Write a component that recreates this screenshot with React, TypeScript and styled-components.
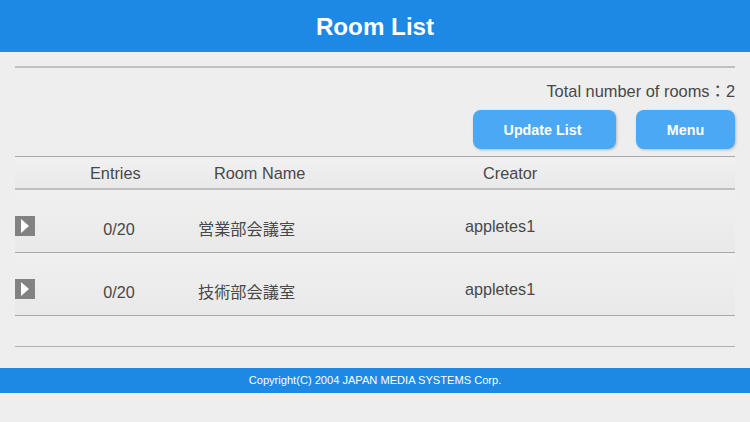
import * as React from 'react'
import styled, { createGlobalStyle } from 'styled-components'

const GlobalStyle = createGlobalStyle`
  html, body {
    margin: 0;
    background: #eeeeee;
    color: #484848;
    font-family: "Liberation Sans", "Noto Sans CJK JP", sans-serif;
  }
`

const Page = styled.div`
  width: 750px;
  height: 422px;
  overflow: hidden;
  display: flex;
  flex-direction: column;
`

const TitleBar = styled.header`
  height: 52px;
  flex: none;
  background: #1e88e5;
  color: #fff;
  font-size: 24.2px;
  font-weight: bold;
  line-height: 53px;
  text-align: center;
`

const Content = styled.main`
  margin: 14px 15px 0;
  border-top: 2px solid #c0c0c0;
`

const TotalLine = styled.div`
  height: 42px;
  font-size: 16.4px;
  line-height: 46px;
  text-align: right;
`

const Buttons = styled.div`
  display: flex;
  justify-content: flex-end;
  gap: 20px;
  margin-bottom: 7px;
`

const ActionButton = styled.button<{ $width: number; $nudge?: number }>`
  width: ${(p) => p.$width}px;
  height: 39px;
  padding: 0 ${(p) => p.$nudge ?? 0}px 0 0;
  border: 0;
  border-radius: 8px;
  background: #4aa8f5;
  box-shadow: 1px 1px 3px rgba(0, 0, 0, 0.22);
  color: #fff;
  font-family: inherit;
  font-size: 14.3px;
  font-weight: bold;
`

const HeadRow = styled.div`
  display: grid;
  grid-template-columns: 60px 80px 210px 1fr;
  height: 31px;
  border-top: 1px solid #a8a8a8;
  border-bottom: 2px solid #c0c0c0;
  background: linear-gradient(#f1f1f1, #e9e9e9);
  font-size: 16.3px;
  line-height: 33px;
`

const HeadCell = styled.div<{ $left: number }>`
  padding-left: ${(p) => p.$left}px;
  white-space: nowrap;
`

const Row = styled.div`
  display: grid;
  grid-template-columns: 64px 80px 267px 1fr;
  height: 62px;
  border-bottom: 1px solid #a8a8a8;
  background: linear-gradient(#f0f0f0, #e9e9e9);
  font-size: 16.2px;
`

const PlayBox = styled.div`
  width: 20px;
  height: 20px;
  margin-top: 26px;
  background: #828282;
  display: flex;
  align-items: center;
  justify-content: center;
`

const Entries = styled.div`
  margin-top: 30px;
  text-align: center;
  line-height: 18px;
`

const RoomName = styled.div`
  margin-top: 28px;
  padding-left: 39px;
  line-height: 22px;
  white-space: nowrap;
`

const Creator = styled.div`
  margin-top: 28px;
  padding-left: 39px;
  line-height: 17px;
`

const BottomRule = styled.div`
  height: 30px;
  border-bottom: 1px solid #b0b0b0;
`

const Footer = styled.footer`
  height: 25px;
  margin-top: 21px;
  flex: none;
  background: #1e88e5;
  color: #fff;
  font-size: 11.1px;
  line-height: 25px;
  text-align: center;
`

const rooms = ['営業部会議室', '技術部会議室']

const App: React.FC = () => (
  <Page>
    <GlobalStyle />
    <TitleBar>Room List</TitleBar>
    <Content>
      <TotalLine>Total number of rooms：2</TotalLine>
      <Buttons>
        <ActionButton $width={143} $nudge={4}>Update List</ActionButton>
        <ActionButton $width={99}>Menu</ActionButton>
      </Buttons>
      <HeadRow>
        <HeadCell $left={0} />
        <HeadCell $left={15}>Entries</HeadCell>
        <HeadCell $left={59}>Room Name</HeadCell>
        <HeadCell $left={118}>Creator</HeadCell>
      </HeadRow>
      {rooms.map((room) => (
        <Row key={room}>
          <div>
            <PlayBox>
              <svg width="8" height="14" viewBox="0 0 8 14">
                <path d="M0 0 L8 7 L0 14 Z" fill="#ffffff" />
              </svg>
            </PlayBox>
          </div>
          <Entries>0/20</Entries>
          <RoomName>{room}</RoomName>
          <Creator>appletes1</Creator>
        </Row>
      ))}
      <BottomRule />
    </Content>
    <Footer>Copyright(C) 2004 JAPAN MEDIA SYSTEMS Corp.</Footer>
  </Page>
)

export default App
